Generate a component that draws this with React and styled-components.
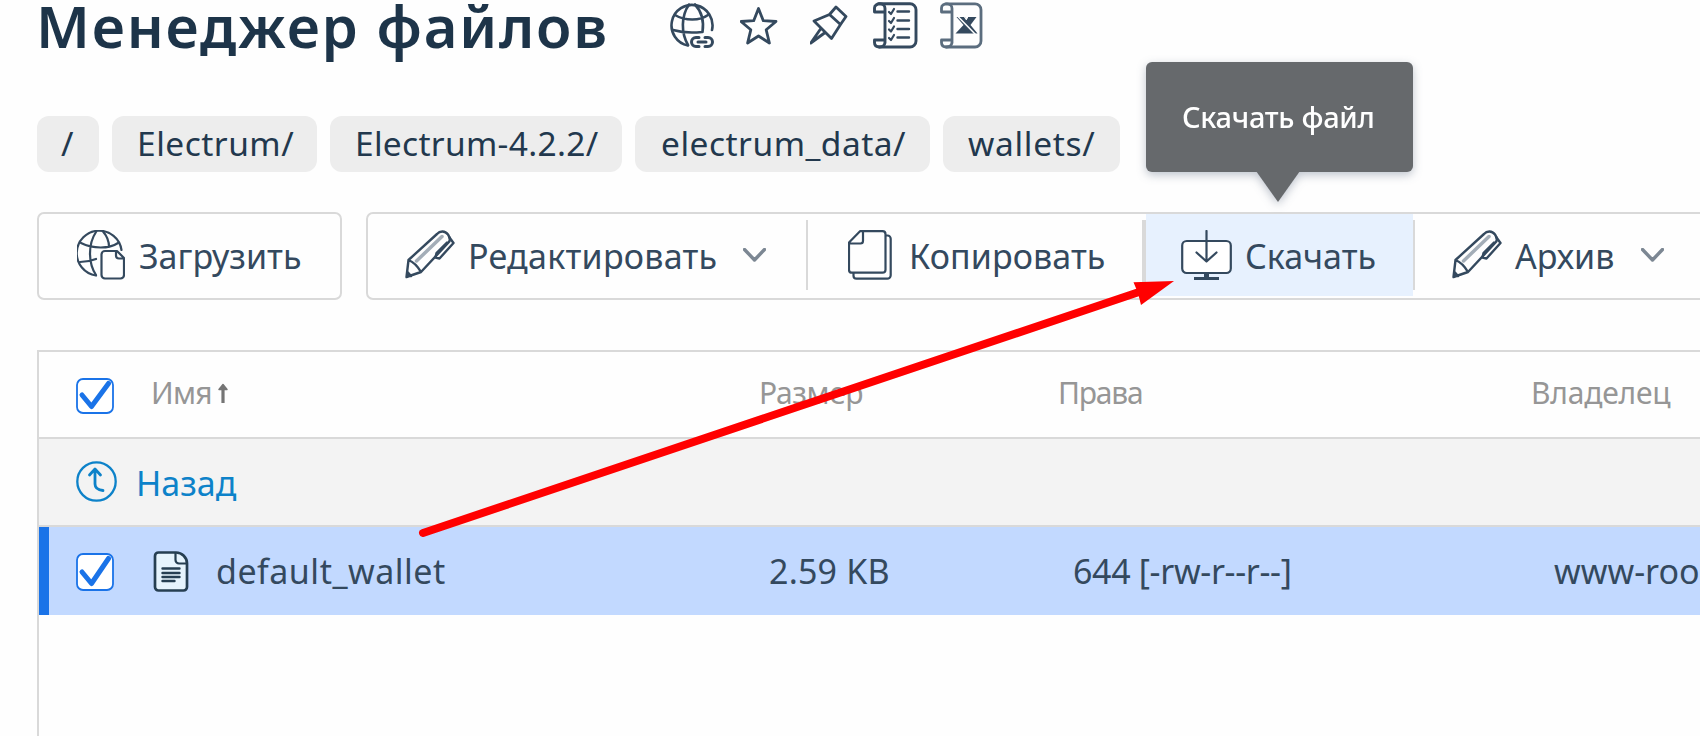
import React from 'react';
import styled, { createGlobalStyle } from 'styled-components';

const GlobalStyle = createGlobalStyle`
  *, *::before, *::after { box-sizing: border-box; }
  html, body { margin: 0; padding: 0; background: #fefefe; overflow: hidden; }
`;

const INK = '#34495e';
const LINE = '#d9d9d9';

const Page = styled.main`
  position: relative;
  width: 1700px;
  height: 736px;
  padding-left: 37px;
  overflow: hidden;
  background: #fefefe;
  color: ${INK};
  font-family: 'Noto Sans', 'Open Sans', sans-serif;
  font-size: 34px;
  white-space: nowrap;
`;

const Header = styled.header`
  display: flex;
  align-items: flex-start;
  height: 116px;
`;

const Title = styled.h1`
  width: 633px;
  margin: -15px 1px 0 -1px;
  color: #1d3449;
  font-size: 58px;
  font-weight: 600;
  line-height: 82px;
  letter-spacing: 1.8px;
`;

const HeaderIcons = styled.div`
  display: flex;
  gap: 24px;
  padding-top: 2px;
`;

const Text = styled.span`
  letter-spacing: ${({ $ls = 0 }) => $ls}px;
`;

const Crumbs = styled.nav`
  display: flex;
  gap: 13px;
  height: 56px;
`;

const Crumb = styled.a`
  width: ${({ $w }) => $w}px;
  height: 56px;
  padding-left: ${({ $pad = 25 }) => $pad}px;
  border-radius: 12px;
  background: #ededed;
  color: #22384d;
  font-size: 33.5px;
  letter-spacing: ${({ $ls = 0 }) => $ls}px;
  line-height: 54px;
`;

const Toolbar = styled.div`
  display: flex;
  gap: 24px;
  height: 88px;
  margin-top: 40px;
`;

const Group = styled.div`
  display: flex;
  flex: none;
  width: ${({ $w }) => $w}px;
  height: 88px;
  border: 2px solid ${LINE};
  border-radius: 7px;
`;

const Tool = styled.button`
  position: relative;
  display: flex;
  flex: none;
  align-items: center;
  width: ${({ $w }) => $w}px;
  height: ${({ $active }) => ($active ? 82 : 84)}px;
  padding: 0 0 0 ${({ $pad }) => $pad}px;
  border: 0;
  background: ${({ $active }) => ($active ? '#e7f1fe' : 'transparent')};
  color: ${INK};
  font: inherit;
  line-height: 80px;
  text-align: left;
  & > svg { flex: none; margin-top: ${({ $active }) => ($active ? 0 : -2)}px; }
`;

const ToolText = styled(Text)`
  width: ${({ $w }) => ($w ? `${$w}px` : 'auto')};
  margin-left: ${({ $gap }) => $gap}px;
  margin-top: ${({ $top = -1 }) => $top}px;
`;

const Divider = styled.i`
  flex: none;
  width: ${({ $w = 2 }) => $w}px;
  height: 70px;
  margin-top: 6px;
  background: ${LINE};
`;

const Tooltip = styled.div`
  position: absolute;
  left: 0;
  bottom: 124px;
  width: 267px;
  height: 110px;
  padding-left: 36px;
  border-radius: 6px;
  background: #66696c;
  color: #fff;
  font-size: 29px;
  font-weight: 500;
  line-height: 110px;
  filter: drop-shadow(0 3px 5px rgba(40, 60, 90, 0.3));
  &::after {
    content: '';
    position: absolute;
    left: 110px;
    top: 109px;
    border: 22px solid transparent;
    border-top: 31px solid #66696c;
    border-bottom: 0;
  }
`;

const Table = styled.section`
  height: 400px;
  margin-top: 50px;
  border: 2px solid ${LINE};
  border-right: 0;
`;

const Row = styled.div`
  display: grid;
  grid-template-columns: 75px 608px 299px 473px 1fr;
  align-items: center;
  height: 88px;
  padding-left: 37px;
  border-bottom: 2px solid ${LINE};
  line-height: 86px;
`;

const HeadRow = styled(Row)`
  height: 87px;
  color: #969696;
  font-size: 30px;
`;

const BackRow = styled(Row)`
  display: flex;
  background: #f3f3f3;
  color: #0d82c9;
`;

const SelectedRow = styled(Row)`
  border-bottom: 0;
  background: #c2d9ff;
  box-shadow: inset 10px 0 #1a73e8;
`;

const Cell = styled.div`
  display: flex;
  align-items: center;
  height: 86px;
  gap: ${({ $gap = 0 }) => $gap}px;
  padding-left: ${({ $pad = 0 }) => $pad}px;
  padding-bottom: ${({ $lift = 0 }) => $lift}px;
  padding-top: ${({ $drop = 0 }) => $drop}px;
`;

const ArrowLayer = styled.svg`
  position: absolute;
  inset: 0;
  pointer-events: none;
`;

const Icon = ({ w, h, sw = 2.2, children, ...rest }) => (
  <svg width={w} height={h} viewBox={`0 0 ${w} ${h}`} fill="none" stroke={INK} strokeWidth={sw}
    strokeLinecap="round" strokeLinejoin="round" {...rest}>{children}</svg>
);

const GlobeLink = () => (
  <Icon w={46} h={48} sw={2.600}>
    <path d="M18 43.5A20.5 20.5 0 1 1 42 28" />
    <path d="M18 43C11 31 11 14 19 2.500M25 2.500C33 11 34 20 32.500 30M5 13C15 19 30 19 38 13M3 28C13 31 22 31 32 30" />
    <path d="M29 35.500h-3a4.500 4.500 0 0 0 0 9h3M35 35.500h3a4.500 4.500 0 0 1 0 9h-3M28 40h8" strokeWidth="3" />
  </Icon>
);

const Star = () => (
  <Icon w={46} h={48} sw={2.800}>
    <path d="M18.500 6.500l4.800 12.200 12.700.8-9.800 8.300 3.200 13.200-10.900-7-10.900 7 3.200-13.200L1 19.500l12.700-.8z" />
  </Icon>
);

const Pin = () => (
  <Icon w={39} h={48} sw={2.800}>
    <path d="M26 5L36 14.500 30.500 22.500 19.500 12.500zM19.500 12.500L4 19 21.500 36.500 30.500 22.500M10.500 27L0.800 41M14.500 31L0.800 41" />
  </Icon>
);

const ScrollShape = ({ w }) => (
  <>
    <path d={`M6 1.800H${w - 8}a6 6 0 0 1 6 6V39a6 6 0 0 1-6 6H6`} />
    <path d="M12 41V6.500C12 3.500 10 1.800 7 1.800S1.500 3.500 1.500 6v4H11M11 38H1.500v2.500c0 3 2 4.500 5 4.500S12 43 12 40" />
  </>
);

const ScrollList = () => (
  <Icon w={45} h={48} sw={2.900}>
    <ScrollShape w={45} />
    <path d="M24.500 9.500h11.500M24.500 18.500h11.500M24.500 27h11.500M24.500 35.500h11.500" strokeWidth="2.400" />
    <path d="M16 10l2 2 3-5M16 19l2 2 3-5M16 27.500l2 2 3-5M16 36l2 2 3-5" strokeWidth="2.200" />
  </Icon>
);

const ScrollSheet = () => (
  <Icon w={43} h={48} stroke="#5b6d7e" sw={2.800} style={{ marginLeft: -2 }}>
    <ScrollShape w={43} />
    <path d="M16.500 15h20l-6 8 7 8.500h-22l8-8.500z" fill={INK} stroke="none" />
    <path d="M17.500 14L35.500 32.500" stroke="#fefefe" strokeWidth="1.500" />
    <path d="M24.500 14.500h3.500l-1.500 3z" fill="#fefefe" stroke="#fefefe" strokeWidth="1" />
  </Icon>
);

const GlobeFile = () => (
  <Icon w={48} h={50}>
    <path d="M19 45.500A22.500 22.500 0 1 1 44.500 20" />
    <path d="M19 45C11 33 11 14 19 2M26 1.500C30 6 32 12 32 17M4 13C16 19 32 19 41 13M3 32C9 32 14 31 19 29" />
    <path d="M28 21h12l7 7v17a3.500 3.500 0 0 1-3.500 3.500H28a3.500 3.500 0 0 1-3.500-3.500V24.500A3.500 3.500 0 0 1 28 21zM39 21.500v4a3 3 0 0 0 3 3h5" />
  </Icon>
);

const Pencil = () => (
  <Icon w={50} h={50} sw={2.400}>
    <path d="M3.500 30L32 4c3-3.500 8-3.500 11 .5 2 3 2.500 6 .5 8L16 42 1.500 47zM3.500 30c5 2 9 6 12.500 12M2.500 42l3.500 4" />
    <path d="M44.500 7.500l4 5.500L34.500 28.500l-4-1 1-4.500 10.500-10.500" />
    <path d="M11.500 31L37 6.500" stroke="#a3adb7" strokeWidth="3.500" />
  </Icon>
);

const Chevron = () => (
  <Icon w={23} h={14} stroke="#7c8793" sw={3.400}><path d="M1.500 1.500l10 10.500 10-10.500" /></Icon>
);

const Copy = () => (
  <Icon w={44} h={50} sw={2.200}>
    <path d="M12 1.200h22.500a3 3 0 0 1 3 3v35.500a3 3 0 0 1-3 3H4a3 3 0 0 1-3-3V12.500zM15 1.500v9.500a2.500 2.500 0 0 1-2.500 2.500H1.500" />
    <path d="M38 5.500h1.500a3.200 3.200 0 0 1 3.200 3.200v36.500a3.500 3.500 0 0 1-3.500 3.500H8.500a3 3 0 0 1-3-3V43" />
  </Icon>
);

const Download = () => (
  <Icon w={51} h={50}>
    <rect x="1.200" y="11" width="48.600" height="32" rx="4.500" fill="#fff" />
    <path d="M25.500 1v30.500M15.500 22.500l10 9 10-9" />
    <path d="M13 48.500h25" strokeWidth="3" strokeLinecap="butt" />
    <path d="M25.500 43v5" strokeWidth="5" strokeLinecap="butt" />
  </Icon>
);

const Check = ({ h = 38 }) => (
  <Icon w={38} h={h} stroke="#1a73e8" sw={1.800}>
    <rect x="1" y="1" width="36" height={h - 2} rx="6" fill="#fff" />
    <path d={`M6 ${h - 19}l9.500 11.500L32.500 5.500`} strokeWidth="5" />
  </Icon>
);

const BackIcon = () => (
  <Icon w={41} h={41} stroke="#0d82c9" sw={2.300}>
    <circle cx="20.500" cy="20.500" r="19.200" />
    <path d="M19 9v14c0 4 3 6 8 6.500M13.500 14L19 8l5.500 6" strokeWidth="2.800" />
  </Icon>
);

const DocIcon = () => (
  <Icon w={36} h={41} stroke="#263f52" sw={2.700}>
    <path d="M5.500 1.500h17.500a11 11 0 0 1 11 11V36a3.500 3.500 0 0 1-3.500 3.500h-25A3.500 3.500 0 0 1 2 36V5a3.500 3.500 0 0 1 3.500-3.500z" fill="#e6f4fd" />
    <path d="M22.500 2v7a3.500 3.500 0 0 0 3.500 3.500h8" strokeWidth="2.200" />
    <path d="M9.500 17.500h17M9.500 22h17M9.500 26h17M9.500 30h12" strokeWidth="2.400" />
  </Icon>
);

const SortArrow = () => (
  <Icon w={12} h={22} stroke="#757575" sw={3.200}>
    <path d="M6 21V5" strokeLinecap="butt" /><path d="M2 7.500L6 2.500l4 5z" fill="#757575" strokeWidth="1.500" />
  </Icon>
);

export default function App() {
  return (
    <>
      <GlobalStyle />
      <Page>
        <Header>
          <Title>Менеджер файлов</Title>
          <HeaderIcons><GlobeLink /><Star /><Pin /><ScrollList /><ScrollSheet /></HeaderIcons>
        </Header>
        <Crumbs>
          <Crumb $w={62} $pad={24}>/</Crumb>
          <Crumb $w={205} $ls={0.5}>Electrum/</Crumb>
          <Crumb $w={292} $ls={0.3}>Electrum-4.2.2/</Crumb>
          <Crumb $w={295} $pad={26} $ls={0.5}>electrum_data/</Crumb>
          <Crumb $w={177} $ls={0.7}>wallets/</Crumb>
        </Crumbs>
        <Toolbar>
          <Group $w={305}>
            <Tool $w={300} $pad={38}><GlobeFile /><ToolText $gap={14}>Загрузить</ToolText></Tool>
          </Group>
          <Group $w={1500}>
            <Tool $w={438} $pad={37}><Pencil /><ToolText $gap={13} $w={275} $ls={0.25}>Редактировать</ToolText><Chevron /></Tool>
            <Divider />
            <Tool $w={334} $pad={40}><Copy /><ToolText $gap={17} $ls={0.1}>Копировать</ToolText></Tool>
            <Divider $w={4} />
            <Tool $w={267} $pad={35} $active><Download /><ToolText $gap={13} $top={2}>Скачать</ToolText>
              <Tooltip><Text $ls={-0.3}>Скачать файл</Text></Tooltip></Tool>
            <Divider />
            <Tool $w={270} $pad={37}><Pencil /><ToolText $gap={13} $w={126}>Архив</ToolText><Chevron /></Tool>
          </Group>
        </Toolbar>
        <Table>
          <HeadRow>
            <Cell $drop={2}><Check h={36} /></Cell>
            <Cell $lift={4} $gap={5}><Text $ls={-0.7}>Имя</Text><SortArrow /></Cell>
            <Cell $lift={4}><Text $ls={-0.4}>Размер</Text></Cell>
            <Cell $lift={4}><Text $ls={-1.2}>Права</Text></Cell>
            <Cell $lift={4}><Text $ls={-0.2}>Владелец</Text></Cell>
          </HeadRow>
          <BackRow><Cell $lift={2}><BackIcon /></Cell><Cell $pad={19} $drop={2}><Text>Назад</Text></Cell></BackRow>
          <SelectedRow>
            <Cell $drop={2}><Check /></Cell>
            <Cell $gap={27} $pad={2}><DocIcon /><Text $ls={0.5}>default_wallet</Text></Cell>
            <Cell $pad={10}><Text $ls={0.2}>2.59 KB</Text></Cell>
            <Cell $pad={15}><Text $ls={-0.35}>644 [-rw-r--r--]</Text></Cell>
            <Cell $pad={23}><Text>www-roo</Text></Cell>
          </SelectedRow>
        </Table>
        <ArrowLayer width="1700" height="736" viewBox="0 0 1700 736">
          <path d="M423 533L1142 291" stroke="#f00" strokeWidth="8" strokeLinecap="round" />
          <path d="M1174 281L1133.500 282.300 1138 293 1141 305z" fill="#f00" />
        </ArrowLayer>
      </Page>
    </>
  );
}
